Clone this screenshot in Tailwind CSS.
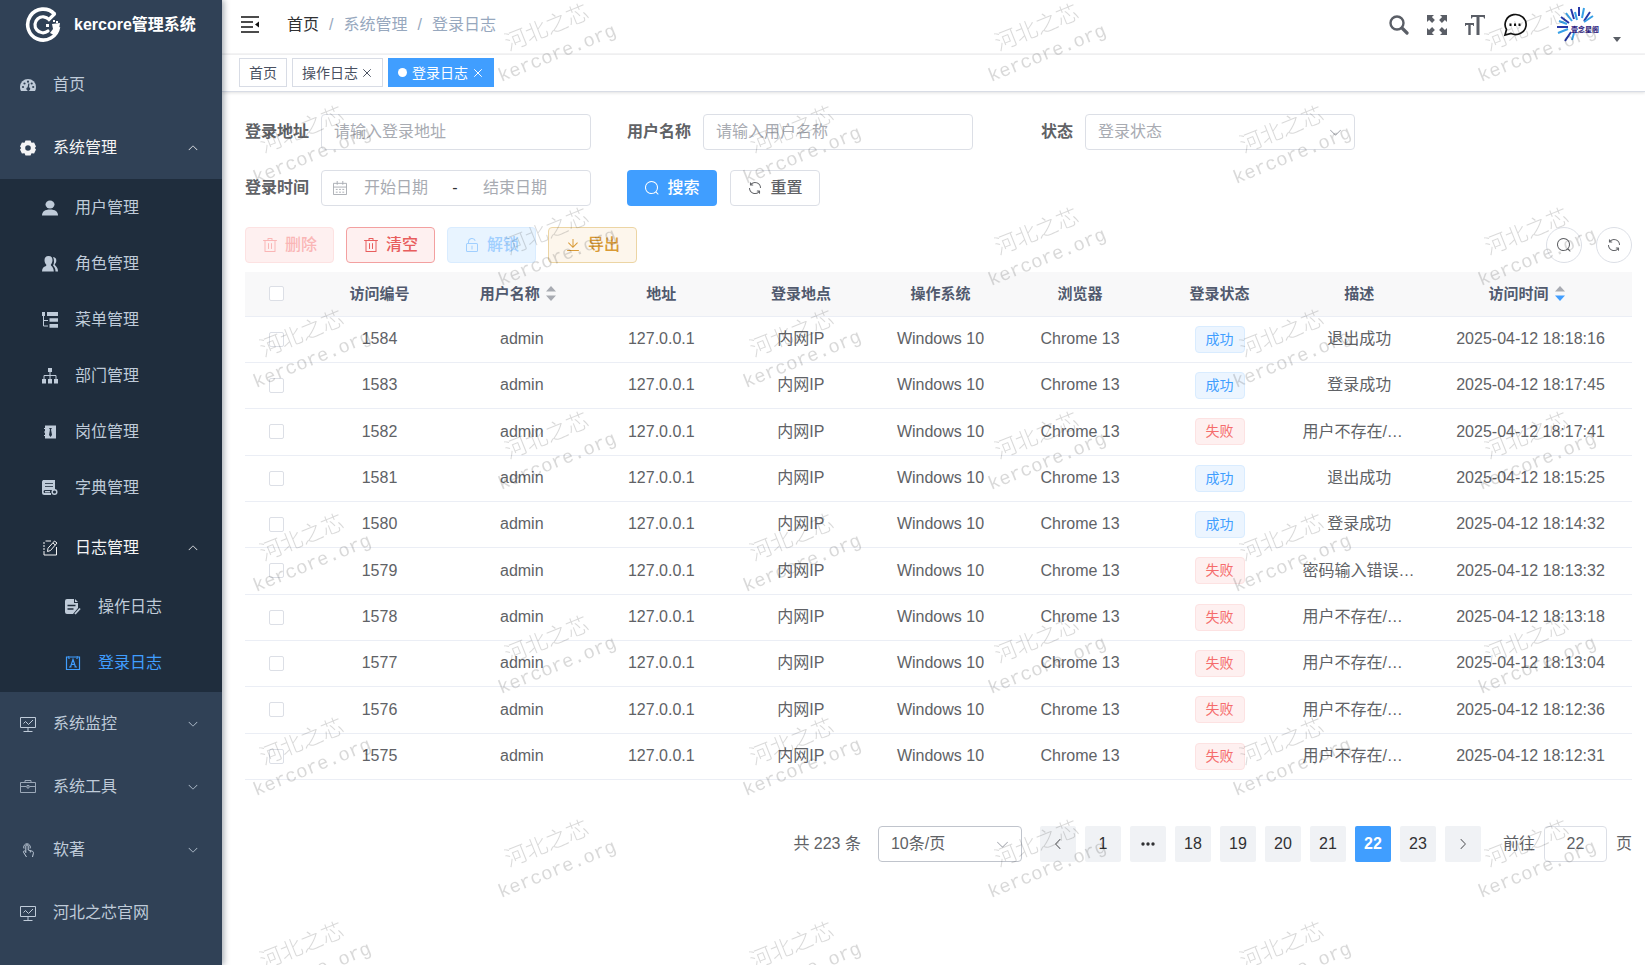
<!DOCTYPE html>
<html lang="zh-CN">
<head>
<meta charset="utf-8">
<title>kercore管理系统</title>
<script src="https://cdn.jsdelivr.net/npm/@tailwindcss/browser@4"></script>
</head>
<body class="min-h-screen flex bg-white text-base leading-6 text-[#606266] font-['Liberation_Sans','Noto_Sans_CJK_SC',sans-serif]">

<svg class="hidden" aria-hidden="true">
  <symbol id="search" viewBox="0 0 1024 1024"><path fill="currentColor" d="m795.904 750.72 124.992 124.928a32 32 0 0 1-45.248 45.248L750.656 795.904a416 416 0 1 1 45.248-45.248zM480 832a352 352 0 1 0 0-704 352 352 0 0 0 0 704z"/></symbol>
  <symbol id="refresh" viewBox="0 0 1024 1024"><path fill="currentColor" d="M771.776 794.88A384 384 0 0 1 128 512h64a320 320 0 0 0 555.712 216.448H654.72a32 32 0 1 1 0-64h149.056a32 32 0 0 1 32 32v148.928a32 32 0 1 1-64 0v-50.56zM276.288 295.616h92.992a32 32 0 0 1 0 64H220.16a32 32 0 0 1-32-32V178.56a32 32 0 0 1 64 0v50.56A384 384 0 0 1 896.128 512h-64a320 320 0 0 0-555.776-216.384z"/></symbol>
  <symbol id="delete" viewBox="0 0 1024 1024"><path fill="currentColor" d="M160 256H96a32 32 0 0 1 0-64h256V95.936a32 32 0 0 1 32-32h256a32 32 0 0 1 32 32V192h256a32 32 0 1 1 0 64h-64v672a32 32 0 0 1-32 32H192a32 32 0 0 1-32-32V256zm448-64v-64H416v64h192zM224 896h576V256H224v640zm192-128a32 32 0 0 1-32-32V416a32 32 0 0 1 64 0v320a32 32 0 0 1-32 32zm192 0a32 32 0 0 1-32-32V416a32 32 0 0 1 64 0v320a32 32 0 0 1-32 32z"/></symbol>
  <symbol id="unlock" viewBox="0 0 1024 1024"><path fill="currentColor" d="M224 448a32 32 0 0 0-32 32v384a32 32 0 0 0 32 32h576a32 32 0 0 0 32-32V480a32 32 0 0 0-32-32H224zm0-64h576a96 96 0 0 1 96 96v384a96 96 0 0 1-96 96H224a96 96 0 0 1-96-96V480a96 96 0 0 1 96-96z"/><path fill="currentColor" d="M512 544a32 32 0 0 1 32 32v192a32 32 0 1 1-64 0V576a32 32 0 0 1 32-32zm178.304-295.296A192.064 192.064 0 0 0 320 320v64h352l96 38.4V448H256V320a256 256 0 0 1 493.76-95.104l-59.456 23.808z"/></symbol>
  <symbol id="download" viewBox="0 0 1024 1024"><path fill="currentColor" d="M160 832h704a32 32 0 1 1 0 64H160a32 32 0 1 1 0-64zm384-253.696 236.288-236.352 45.248 45.248L508.8 704 192 387.2l45.248-45.248L480 584.704V128h64v450.304z"/></symbol>
  <symbol id="arrow" viewBox="0 0 1024 1024"><path fill="currentColor" d="M831.872 340.864 512 652.672 192.128 340.864a30.592 30.592 0 0 0-42.752 0 29.12 29.12 0 0 0 0 41.6L489.664 714.24a32 32 0 0 0 44.672 0l340.288-331.712a29.12 29.12 0 0 0 0-41.728 30.592 30.592 0 0 0-42.752 0z"/></symbol>
  <symbol id="close" viewBox="0 0 16 16"><path fill="none" stroke="currentColor" stroke-width="1.3" d="M3 3l10 10M13 3L3 13"/></symbol>
  <symbol id="monitor" viewBox="0 0 16 16"><path fill="none" stroke="currentColor" d="M.5 1.5h15v10H.5zM8 11.500v3.500M3.500 15.500h9M3.500 7.500l2-2 3 3 4.500-4.500"/></symbol>
</svg>

<aside class="relative z-20 w-[222px] shrink-0 bg-[#304156] text-[#bfcbd9] shadow-[2px_0_6px_rgba(0,21,41,0.35)]">
  <a href="#" class="flex h-[53px] items-center gap-[13px] pl-[25px] pb-1 font-bold text-white">
    <svg class="size-9" viewBox="0 0 36 36" fill="none" stroke="#fff"><path stroke-width="3.600" d="M29.500 7A15.500 15.500 0 1 0 33.500 20"/><path stroke-width="3.200" stroke-linecap="round" d="M29.500 7L24 12.500A8 8 0 1 0 23 24"/><path fill="#fff" stroke="none" d="M27 17l8-1-1 6-5 6-4-2 3-4zM28 13h2v2h-2zM21 17h3v3h-3zM31 14h2v2h-2z"/></svg>
    <span>kercore管理系统</span>
  </a>
  <nav>
    <a href="#" class="flex h-[63px] items-center gap-[17px] pl-5">
      <svg class="size-4" viewBox="0 0 16 16"><path fill="currentColor" d="M8 2a8 8 0 0 0-8 8c0 1.600.4 2.900 1 4h14c.6-1.100 1-2.400 1-4a8 8 0 0 0-8-8z"/><g fill="#304156"><circle cx="3" cy="10" r="1.100"/><circle cx="4.500" cy="6.500" r="1.100"/><circle cx="8" cy="4.700" r="1.100"/><circle cx="11.700" cy="6.500" r="1.100"/><circle cx="13.200" cy="10" r="1.100"/><path d="M8.300 6.500h1.200L9 10.200a1.800 1.800 0 1 1-1.400 0z"/></g></svg>
      首页</a>
    <a href="#" class="flex h-[63px] items-center gap-[17px] pl-5 pr-[23px] text-[#f4f4f5]">
      <svg class="size-4" viewBox="0 0 16 16"><path fill="currentColor" fill-rule="evenodd" d="M5.500.5h5l1 2.300 2.600-.2L16 6.500 14.800 8 16 9.500l-1.900 3.900-2.600-.2-1 2.300h-5l-1-2.300-2.600.2L0 9.500 1.200 8 0 6.500l1.900-3.900 2.600.2zM8 5.200a2.800 2.800 0 1 0 0 5.600 2.800 2.800 0 0 0 0-5.600z"/></svg>
      <span class="grow">系统管理</span>
      <svg class="size-3 rotate-180"><use href="#arrow"/></svg></a>
    <div class="bg-[#1f2d3d] py-px">
      <a href="#" class="flex h-14 items-center gap-[17px] pl-[42px]">
        <svg class="size-4" viewBox="0 0 16 16" fill="currentColor"><ellipse cx="8" cy="4.500" rx="4.500" ry="4"/><path d="M0 15.500c0-4 3-6 8-6s8 2 8 6z"/></svg>用户管理</a>
      <a href="#" class="flex h-14 items-center gap-[17px] pl-[42px]">
        <svg class="size-4" viewBox="0 0 16 16" fill="currentColor"><path d="M6.500 0c3 0 4.200 2 4 4.500-.1 2-1 3.300-1.700 4.200 0 1.300 3 2 3 6.800H0c0-3.500 1.500-4.700 4-5.600.5-.5.4-1 .1-1.300C3.300 7.700 2.500 6 2.500 4.200 2.500 2 3.700 0 6.500 0z"/><path d="M11 1c2.500.3 3.500 2 3.300 4-.2 1.700-1 2.600-1.600 3.500.2 1.500 3.300 2 3.300 7h-2.500c0-3-1-4.500-2.500-6 1.200-2 1.500-5.500 0-8.500z"/></svg>角色管理</a>
      <a href="#" class="flex h-14 items-center gap-[17px] pl-[42px]">
        <svg class="size-4" viewBox="0 0 16 16" fill="currentColor"><path d="M0 0h3v4H0zM5 0h11v4H5zM7.500 6.200H16v3.600H7.500zM7.500 12H16v3.800H7.500z"/><path fill="none" stroke="currentColor" d="M1.500 4v10H6M1.500 8.500H6"/></svg>菜单管理</a>
      <a href="#" class="flex h-14 items-center gap-[17px] pl-[42px]">
        <svg class="size-4" viewBox="0 0 16 16" fill="currentColor"><path d="M6 0h4v4H6zM0 11h4v4.500H0zM6 11h4v4.500H6zM12 11h4v4.500h-4z"/><path fill="none" stroke="currentColor" d="M8 4v7M2 11V7.500h12V11"/></svg>部门管理</a>
      <a href="#" class="flex h-14 items-center gap-[17px] pl-[42px]">
        <svg class="size-4" viewBox="0 0 16 16"><path fill="currentColor" fill-rule="evenodd" d="M3 1.500h11v13H3V12H2v-1h1V8.500H2v-1h1V5H2V4h1zM7 4l1 1.500L7 11l1.500 2L10 11 9 5.500 10 4z"/></svg>岗位管理</a>
      <a href="#" class="flex h-14 items-center gap-[17px] pl-[42px]">
        <svg class="size-4" viewBox="0 0 16 16"><path fill="currentColor" d="M1 0h12v10H3a1.500 1.500 0 0 0 0 3h6v2H2.500A2.500 2.500 0 0 1 0 12.500V1.500z"/><path stroke="#1f2d3d" stroke-width=".8" d="M3 3.500h8M3 6.500h8"/><circle cx="12.500" cy="12" r="2.300" fill="none" stroke="currentColor" stroke-width="1.500"/><path stroke="currentColor" stroke-width="1.500" d="M3 11.700h5"/></svg>字典管理</a>
      <a href="#" class="flex h-[63px] items-center gap-[17px] pl-[42px] pr-[23px] text-[#f4f4f5]">
        <svg class="size-4" viewBox="0 0 16 16" fill="none" stroke="currentColor"><path d="M9 1H3.500M2 2v2m0 1v2m0 1v2m0 1v4h12.500V7"/><path d="M12.500 1l2.500 2-6.500 7.500-3 1 .5-3.300zM11 3l2.300 2"/></svg>
        <span class="grow">日志管理</span>
        <svg class="size-3 rotate-180"><use href="#arrow"/></svg></a>
      <a href="#" class="flex h-14 items-center gap-[17px] pl-[65px]">
        <svg class="size-4" viewBox="0 0 16 16"><path fill="currentColor" d="M2 0h7v4h4v5l-5 6H2a2 2 0 0 1-2-2V2a2 2 0 0 1 2-2zM10 0l3 3h-3z"/><path stroke="#1f2d3d" stroke-width="1.500" d="M2.500 6.500h8M2.500 10h6"/><path fill="none" stroke="currentColor" stroke-width="1.800" d="M10 15l5-5.500"/></svg>操作日志</a>
      <a href="#" class="flex h-14 items-center gap-[17px] pl-[65px] text-[#409eff]">
        <svg class="size-4" viewBox="0 0 16 16" fill="none" stroke="currentColor" stroke-width="1.200"><path d="M3.500 2H1.500v12.500h13V2h-2M5 2h6M4 1v3M12 1v3M5.500 12L8 4.500l2.500 7.500M6.300 9.500h3.400M4 12h2.500M9.500 12H12"/></svg>登录日志</a>
    </div>
    <a href="#" class="flex h-[63px] items-center gap-[17px] pl-5 pr-[23px]">
      <svg class="size-4"><use href="#monitor"/></svg><span class="grow">系统监控</span><svg class="size-3"><use href="#arrow"/></svg></a>
    <a href="#" class="flex h-[63px] items-center gap-[17px] pl-5 pr-[23px]">
      <svg class="size-4 opacity-75" viewBox="0 0 16 16" fill="none" stroke="currentColor"><path d="M.5 3.500h15v10H.5zM5 3.500v-2h6v2M.5 7.500h6m3 0h6M7 6.500h2v2.500H7z"/></svg><span class="grow">系统工具</span><svg class="size-3"><use href="#arrow"/></svg></a>
    <a href="#" class="flex h-[63px] items-center gap-[17px] pl-5 pr-[23px]">
      <svg class="size-4" viewBox="0 0 16 16" fill="none" stroke="currentColor"><path d="M4 6.500a3.300 3.300 0 1 1 6 0M5.800 11V4a1.200 1.200 0 0 1 2.400 0v4l4 1.200c1 .3 1.300 1 1.200 2L12.500 15M5.800 9.500C4.500 8.500 3 9 3.500 10.200l3 4.800M10.300 9v1.500"/></svg><span class="grow">软著</span><svg class="size-3"><use href="#arrow"/></svg></a>
    <a href="#" class="flex h-[63px] items-center gap-[17px] pl-5">
      <svg class="size-4"><use href="#monitor"/></svg>河北之芯官网</a>
  </nav>
</aside>

<div class="relative flex min-w-0 grow flex-col">
  <header class="flex h-[55px] items-center border-b-2 border-[#f4f4f5] pl-[19px] pr-6 pb-1">
    <button type="button" aria-label="收起菜单" class="mr-7"><svg class="block size-[18px]" viewBox="0 0 18 18"><path stroke="#111" stroke-width="1.600" d="M0 1h18M0 6h12M0 11h12M0 16h18"/><path fill="#111" d="M18 5.500v6l-4-3z"/></svg></button>
    <nav class="flex gap-[10px] text-[#97a8be]">
      <a href="#" class="text-[#303133]">首页</a><span>/</span><span>系统管理</span><span>/</span><span>登录日志</span>
    </nav>
    <div class="ml-auto flex items-center gap-[18px] text-[#5a5e66]">
      <button type="button" aria-label="搜索菜单"><svg class="block size-5" viewBox="0 0 20 20" fill="none" stroke="currentColor"><circle cx="8" cy="8" r="6.500" stroke-width="2.400"/><path stroke-width="3.200" stroke-linecap="round" d="M13.500 13.500l4.500 4.500"/></svg></button>
      <button type="button" aria-label="全屏"><svg class="block size-5" viewBox="0 0 20 20"><path fill="currentColor" d="M0 0h7L4.900 2.100l3 3-2.800 2.800-3-3L0 7zM20 0v7l-2.100-2.100-3 3-2.800-2.800 3-3L13 0zM0 20v-7l2.100 2.100 3-3 2.800 2.800-3 3L7 20zM20 20h-7l2.100-2.100-3-3 2.800-2.800 3 3L20 13z"/></svg></button>
      <button type="button" aria-label="字号"><svg class="block size-5" viewBox="0 0 20 20"><path fill="currentColor" d="M6 0h14v3.500h-1L18.500 2h-4v18h-3V2h-4L7 3.500H6zM0 8h9v3H8.200L8 10H5.700v10H3.300V10H1l-.2 1H0z"/></svg></button>
      <button type="button" aria-label="消息"><svg class="block size-6" viewBox="0 0 24 24"><path fill="none" stroke="#111" stroke-width="1.700" d="M3.500 16.500A10.500 10 0 1 1 8 20.500l-6 1.500z"/><path fill="#111" d="M6.500 10.500h2V13h-2zM11 10.500h2V13h-2zM15.500 10.500h2V13h-2z"/></svg></button>
      <button type="button" aria-label="用户菜单" class="ml-3 flex items-end gap-3">
        <svg class="h-9 w-11" viewBox="0 0 44 36" fill="none" stroke-width="2"><path stroke="#2638a8" d="M0 20h11M8 34l6-9M14 2l3 10M22 0v9M33 5l-6 9M4 10l8 6"/><path stroke="#38a0e6" d="M1 26l10-4M2 14l8 3M9 6l6 8M18 5l2 8M27 1l-2 10M36 9l-9 6M15 33l2-7"/><text x="14" y="25" font-size="7" font-weight="700" fill="#2a2080" stroke="none">壹念星阁</text></svg>
        <svg class="mb-px h-[5px] w-2" viewBox="0 0 8 5"><path fill="currentColor" d="M0 0h8L4 5z"/></svg>
      </button>
    </div>
  </header>
  <div class="flex h-[37px] items-start gap-[5px] border-b border-[#d8dce5] pl-[17px] pt-[3px] text-sm text-[#495060] shadow-[0_1px_3px_rgba(0,0,0,0.12)]">
    <a href="#" class="flex h-[29px] items-center border border-[#d8dce5] px-[9px]">首页</a>
    <a href="#" class="flex h-[29px] items-center gap-[3px] border border-[#d8dce5] px-[9px]">操作日志<svg class="size-3"><use href="#close"/></svg></a>
    <a href="#" class="flex h-[29px] items-center gap-1 bg-[#409eff] px-[10px] text-white"><span class="mr-px size-[9px] rounded-full bg-white"></span>登录日志<svg class="size-3"><use href="#close"/></svg></a>
  </div>

  <main class="flex flex-col pb-6 pl-[23px] pr-[13px] pt-[22px]">
    <form class="flex flex-wrap gap-x-9 gap-y-5">
      <div class="flex h-9 items-center">
        <label for="addr" class="w-[76px] pr-3 text-right font-bold whitespace-nowrap">登录地址</label>
        <input id="addr" type="text" placeholder="请输入登录地址" class="h-9 w-[270px] rounded border border-[#dcdfe6] px-3 placeholder:text-[#a8abb2]">
      </div>
      <div class="flex h-9 items-center">
        <label for="user" class="w-[76px] pr-3 text-right font-bold whitespace-nowrap">用户名称</label>
        <input id="user" type="text" placeholder="请输入用户名称" class="h-9 w-[270px] rounded border border-[#dcdfe6] px-3 placeholder:text-[#a8abb2]">
      </div>
      <div class="flex h-9 items-center">
        <label for="status" class="w-[76px] pr-3 text-right font-bold">状态</label>
        <div class="relative">
          <select id="status" class="h-9 w-[270px] appearance-none rounded border border-[#dcdfe6] bg-white px-3 text-[#a8abb2]"><option>登录状态</option></select>
          <svg class="pointer-events-none absolute right-3 top-[11px] size-[15px] text-[#a8abb2]"><use href="#arrow"/></svg>
        </div>
      </div>
      <div class="flex h-9 items-center">
        <label for="start" class="w-[76px] pr-3 text-right font-bold whitespace-nowrap">登录时间</label>
        <div class="flex h-9 w-[270px] items-center rounded border border-[#dcdfe6] pl-[11px] text-[#303133]">
          <svg class="size-[14px] shrink-0 text-[#a8abb2]" viewBox="0 0 15 15" fill="none" stroke="currentColor"><path d="M.5 2.500h14v12H.5zM.5 6.500h14M4.500 0v4M10.500 0v4M3 9h2m1.500 0h2M10 9h2M3 12h2m1.500 0h2m1.500 0h2"/></svg>
          <input id="start" type="text" placeholder="开始日期" class="w-[98px] text-center placeholder:text-[#a8abb2]">
          <span class="w-5 text-center">-</span>
          <input aria-label="结束日期" type="text" placeholder="结束日期" class="w-[100px] text-center placeholder:text-[#a8abb2]">
        </div>
      </div>
      <div class="flex gap-[13px]">
        <button type="button" class="flex h-9 w-[90px] items-center justify-center gap-[7px] rounded bg-[#409eff] font-medium text-white"><svg class="size-4"><use href="#search"/></svg>搜索</button>
        <button type="button" class="flex h-9 w-[90px] items-center justify-center gap-[7px] rounded border border-[#dcdfe6] font-medium"><svg class="size-4"><use href="#refresh"/></svg>重置</button>
      </div>
    </form>

    <div class="mt-[21px] flex gap-3 font-medium">
      <button type="button" disabled class="flex h-9 w-[89px] items-center justify-center gap-[7px] rounded border border-[#fde2e2] bg-[#fef0f0] text-[#fab6b6]"><svg class="size-4"><use href="#delete"/></svg>删除</button>
      <button type="button" class="flex h-9 w-[89px] items-center justify-center gap-[7px] rounded border border-[#f3a0a0] bg-[#fef0f0] text-[#e85d5d]"><svg class="size-4"><use href="#delete"/></svg>清空</button>
      <button type="button" disabled class="flex h-9 w-[89px] items-center justify-center gap-[7px] rounded border border-[#d9ecff] bg-[#e8f4ff] text-[#a0cfff]"><svg class="size-4"><use href="#unlock"/></svg>解锁</button>
      <button type="button" class="flex h-9 w-[89px] items-center justify-center gap-[7px] rounded border border-[#ecd5a4] bg-[#fdf6ec] text-[#d99a36]"><svg class="size-4"><use href="#download"/></svg>导出</button>
      <button type="button" aria-label="隐藏搜索" class="ml-auto flex size-9 items-center justify-center rounded-full border border-[#dcdfe6]"><svg class="size-4"><use href="#search"/></svg></button>
      <button type="button" aria-label="刷新" class="ml-0.5 flex size-9 items-center justify-center rounded-full border border-[#dcdfe6]"><svg class="size-4"><use href="#refresh"/></svg></button>
    </div>

    <table class="mt-[9px] w-full table-fixed border-collapse text-center">
      <colgroup><col class="w-[62px]"><col class="w-[145px]"><col><col><col><col><col><col><col><col class="w-[203px]"></colgroup>
      <thead class="bg-[#f8f8f9] text-[15px] text-[#515a6e]">
        <tr class="h-[44px] border-b border-[#ebeef5]">
          <th><input type="checkbox" aria-label="全选" class="block mx-auto size-[15px] appearance-none rounded-xs border border-[#dcdfe6] bg-white"></th>
          <th>访问编号</th>
          <th><button type="button" class="inline-flex items-center gap-[6px] pr-2">用户名称<svg class="h-[15px] w-[10px]" viewBox="0 0 10 15"><path fill="#a8abb2" d="M5 0l5 5.500H0zM0 9.500h10L5 15z"/></svg></button></th>
          <th>地址</th><th>登录地点</th><th>操作系统</th><th>浏览器</th><th>登录状态</th><th>描述</th>
          <th><button type="button" class="inline-flex items-center gap-[6px] pr-2">访问时间<svg class="h-[15px] w-[10px]" viewBox="0 0 10 15"><path fill="#a8abb2" d="M5 0l5 5.500H0z"/><path fill="#409eff" d="M0 9.500h10L5 15z"/></svg></button></th>
        </tr>
      </thead>
      <tbody id="rows"></tbody>
    </table>

    <div class="mt-[46px] flex items-center justify-end gap-[9px]">
      <span class="mr-2">共 223 条</span>
      <div class="relative mr-[9px]">
        <select aria-label="每页条数" class="block h-9 w-[144px] appearance-none rounded border border-[#c0c4cc] bg-white px-3"><option>10条/页</option></select>
        <svg class="pointer-events-none absolute right-3 top-[11px] size-[15px] text-[#a8abb2]"><use href="#arrow"/></svg>
      </div>
      <button type="button" aria-label="上一页" class="flex size-9 items-center justify-center rounded-xs bg-[#f0f2f5]"><svg class="size-[14px] rotate-90"><use href="#arrow"/></svg></button>
      <button type="button" class="size-9 rounded-xs bg-[#f0f2f5] text-[#303133]">1</button>
      <button type="button" aria-label="向前5页" class="flex size-9 items-center justify-center rounded-xs bg-[#f0f2f5] text-[#303133]"><svg class="size-4" viewBox="0 0 16 16" fill="currentColor"><circle cx="3" cy="8" r="1.700"/><circle cx="8" cy="8" r="1.700"/><circle cx="13" cy="8" r="1.700"/></svg></button>
      <button type="button" class="size-9 rounded-xs bg-[#f0f2f5] text-[#303133]">18</button>
      <button type="button" class="size-9 rounded-xs bg-[#f0f2f5] text-[#303133]">19</button>
      <button type="button" class="size-9 rounded-xs bg-[#f0f2f5] text-[#303133]">20</button>
      <button type="button" class="size-9 rounded-xs bg-[#f0f2f5] text-[#303133]">21</button>
      <button type="button" class="size-9 rounded-xs bg-[#409eff] font-bold text-white">22</button>
      <button type="button" class="size-9 rounded-xs bg-[#f0f2f5] text-[#303133]">23</button>
      <button type="button" aria-label="下一页" class="flex size-9 items-center justify-center rounded-xs bg-[#f0f2f5]"><svg class="size-[14px] -rotate-90"><use href="#arrow"/></svg></button>
      <label for="goto" class="ml-[13px]">前往</label>
      <input id="goto" type="text" value="22" class="h-9 w-[63px] rounded border border-[#dcdfe6] text-center">
      <span>页</span>
    </div>
  </main>

  <svg class="pointer-events-none absolute inset-0 z-10 h-full w-full" aria-hidden="true">
    <defs>
      <pattern id="wm" width="490" height="204" patternUnits="userSpaceOnUse">
        <g fill="#000" fill-opacity="0.15" text-anchor="middle">
          <g transform="translate(335 53) rotate(-22)"><text y="-20" font-size="22" font-weight="300">河北之芯</text><text y="6" font-size="19" font-family="Liberation Mono">kercore.org</text></g>
          <g transform="translate(90 155) rotate(-22)"><text y="-20" font-size="22" font-weight="300">河北之芯</text><text y="6" font-size="19" font-family="Liberation Mono">kercore.org</text></g>
        </g>
      </pattern>
    </defs>
    <rect width="100%" height="100%" fill="url(#wm)"/>
  </svg>
</div>

<script>
const logs = [
  [1584, true, '退出成功', '18:18:16'], [1583, true, '登录成功', '18:17:45'],
  [1582, false, '用户不存在/…', '18:17:41'], [1581, true, '退出成功', '18:15:25'],
  [1580, true, '登录成功', '18:14:32'], [1579, false, '密码输入错误…', '18:13:32'],
  [1578, false, '用户不存在/…', '18:13:18'], [1577, false, '用户不存在/…', '18:13:04'],
  [1576, false, '用户不存在/…', '18:12:36'], [1575, false, '用户不存在/…', '18:12:31']
];
document.getElementById('rows').innerHTML = logs.map(([id, ok, text, time]) => `
  <tr class="h-[46px] nth-[3n]:h-[47px] border-b border-[#ebeef5]">
    <td><input type="checkbox" aria-label="选择 ${id}" class="block mx-auto size-[15px] appearance-none rounded-xs border border-[#dcdfe6] bg-white"></td>
    <td>${id}</td><td>admin</td><td>127.0.0.1</td><td>内网IP</td><td>Windows 10</td><td>Chrome 13</td>
    <td><span class="${ok
      ? 'inline-block align-middle rounded border border-[#d9ecff] bg-[#ecf5ff] px-[10px] text-sm leading-[25px] text-[#409eff]'
      : 'inline-block align-middle rounded border border-[#fde2e2] bg-[#fef0f0] px-[10px] text-sm leading-[25px] text-[#f56c6c]'}">${ok ? '成功' : '失败'}</span></td>
    <td class="${text.endsWith('…') ? 'pl-[13px] text-left whitespace-nowrap' : 'text-center'}">${text}</td>
    <td>2025-04-12 ${time}</td>
  </tr>`).join('');
</script>
</body>
</html>
